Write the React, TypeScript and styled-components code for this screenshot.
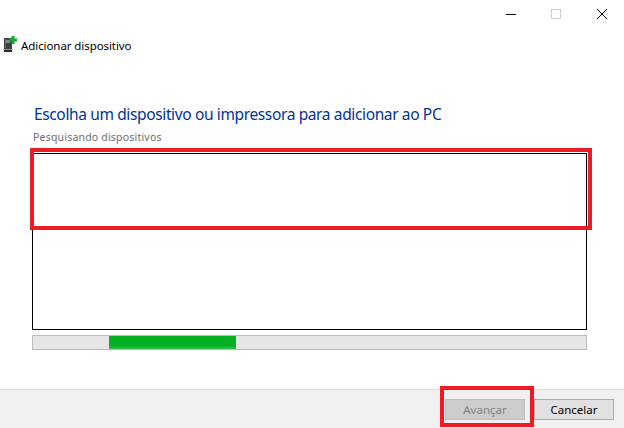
import React from 'react';
import styled, { createGlobalStyle } from 'styled-components';

const GlobalStyle = createGlobalStyle`
  html, body {
    margin: 0;
    padding: 0;
    background: #fff;
  }
  * {
    box-sizing: border-box;
  }
`;

const Window = styled.div`
  position: relative;
  width: 624px;
  height: 428px;
  overflow: hidden;
  display: flex;
  flex-direction: column;
  background: #fff;
  font-family: 'Noto Sans', 'Open Sans', sans-serif;
`;

const Controls = styled.div`
  height: 30px;
  display: flex;
  justify-content: flex-end;
`;

const ControlButton = styled.div<{ $width?: number }>`
  width: ${({ $width }) => $width ?? 46}px;
  height: 28px;
  display: flex;
  align-items: center;
  justify-content: center;
  transform: translateX(1px);
`;

const Header = styled.div`
  height: 30px;
  display: flex;
  align-items: center;
  gap: 2px;
  padding-left: 3px;

  & > svg {
    margin-top: -2px;
  }
`;

const HeaderTitle = styled.span`
  font-size: 11.5px;
  color: #000;
  letter-spacing: -0.08px;
`;

const Content = styled.main`
  flex: 1;
  padding: 43px 37px 0 32px;
  display: flex;
  flex-direction: column;
`;

const Heading = styled.h1`
  margin: 0 0 0 2px;
  font-size: 15.5px;
  line-height: 22px;
  font-weight: 400;
  color: #003399;
  white-space: nowrap;
  letter-spacing: -0.37px;
`;

const Status = styled.div`
  margin: 5px 0 9px 1px;
  font-size: 10.5px;
  line-height: 14px;
  color: #6d6d6d;
  letter-spacing: 0.2px;
`;

const DeviceList = styled.div`
  height: 177px;
  border: 1px solid #000;
  background: #fff;
`;

const ProgressTrack = styled.div`
  margin-top: 5px;
  height: 15px;
  border: 1px solid #bcbcbc;
  background: #e6e6e6;
  display: flex;
`;

const ProgressBar = styled.div<{ $offset: number; $width: number }>`
  margin-left: ${({ $offset }) => $offset}px;
  width: ${({ $width }) => $width}px;
  background: linear-gradient(to bottom, #06b025 0, #06b025 75%, #37c24f 100%);
`;

const Footer = styled.footer`
  height: 39px;
  background: #f0f0f0;
  border-top: 1px solid #dfdfdf;
  display: flex;
  justify-content: flex-end;
  align-items: flex-start;
  gap: 9px;
  padding: 9px 10px 0 0;
`;

const Button = styled.button<{ $disabled?: boolean }>`
  width: 80px;
  height: 21px;
  padding: 0;
  font-family: inherit;
  font-size: 11.5px;
  line-height: 18px;
  border: 1px solid ${({ $disabled }) => ($disabled ? '#bfbfbf' : '#adadad')};
  background: ${({ $disabled }) => ($disabled ? '#cccccc' : '#e1e1e1')};
  color: ${({ $disabled }) => ($disabled ? '#838383' : '#000')};
`;

const Highlight = styled.div<{ $left: number; $top: number; $width: number; $height: number }>`
  position: absolute;
  left: ${({ $left }) => $left}px;
  top: ${({ $top }) => $top}px;
  width: ${({ $width }) => $width}px;
  height: ${({ $height }) => $height}px;
  border: 4px solid #ed1c24;
  pointer-events: none;
`;

function DeviceIcon() {
  return (
    <svg width="16" height="16" viewBox="0 0 16 16">
      <rect x="1" y="2" width="8" height="11" fill="#3a3f3f" />
      <rect x="2" y="3" width="1" height="9" fill="#6a7070" />
      <rect x="3" y="4" width="4" height="3" fill="#7d8a8a" />
      <rect x="0" y="13" width="10" height="1" fill="#9a9a9a" />
      <rect x="1" y="14" width="8" height="2" fill="#2a2a2a" />
      <path d="M8.5 0h3v2.5H14v3h-2.5V8h-3V5.5H6v-3h2.5z" fill="#0ab02a" />
    </svg>
  );
}

export default function App() {
  return (
    <>
      <GlobalStyle />
      <Window>
        <Controls>
          <ControlButton $width={44}>
            <svg width="10" height="10" viewBox="0 0 10 10">
              <path d="M0 5.5h10" stroke="#000" strokeWidth="1" />
            </svg>
          </ControlButton>
          <ControlButton>
            <svg width="10" height="10" viewBox="0 0 10 10">
              <rect x="0.5" y="0.5" width="9" height="9" fill="none" stroke="#cccccc" />
            </svg>
          </ControlButton>
          <ControlButton>
            <svg width="10" height="10" viewBox="0 0 10 10">
              <path d="M0 0l10 10M10 0L0 10" stroke="#000" strokeWidth="1" fill="none" />
            </svg>
          </ControlButton>
        </Controls>
        <Header>
          <DeviceIcon />
          <HeaderTitle>Adicionar dispositivo</HeaderTitle>
        </Header>
        <Content>
          <Heading>Escolha um dispositivo ou impressora para adicionar ao PC</Heading>
          <Status>Pesquisando dispositivos</Status>
          <DeviceList />
          <ProgressTrack>
            <ProgressBar $offset={76} $width={127} />
          </ProgressTrack>
        </Content>
        <Footer>
          <Button $disabled>Avançar</Button>
          <Button>Cancelar</Button>
        </Footer>
        <Highlight $left={30} $top={148} $width={562} $height={82} />
        <Highlight $left={440} $top={386} $width={94} $height={41} />
      </Window>
    </>
  );
}
